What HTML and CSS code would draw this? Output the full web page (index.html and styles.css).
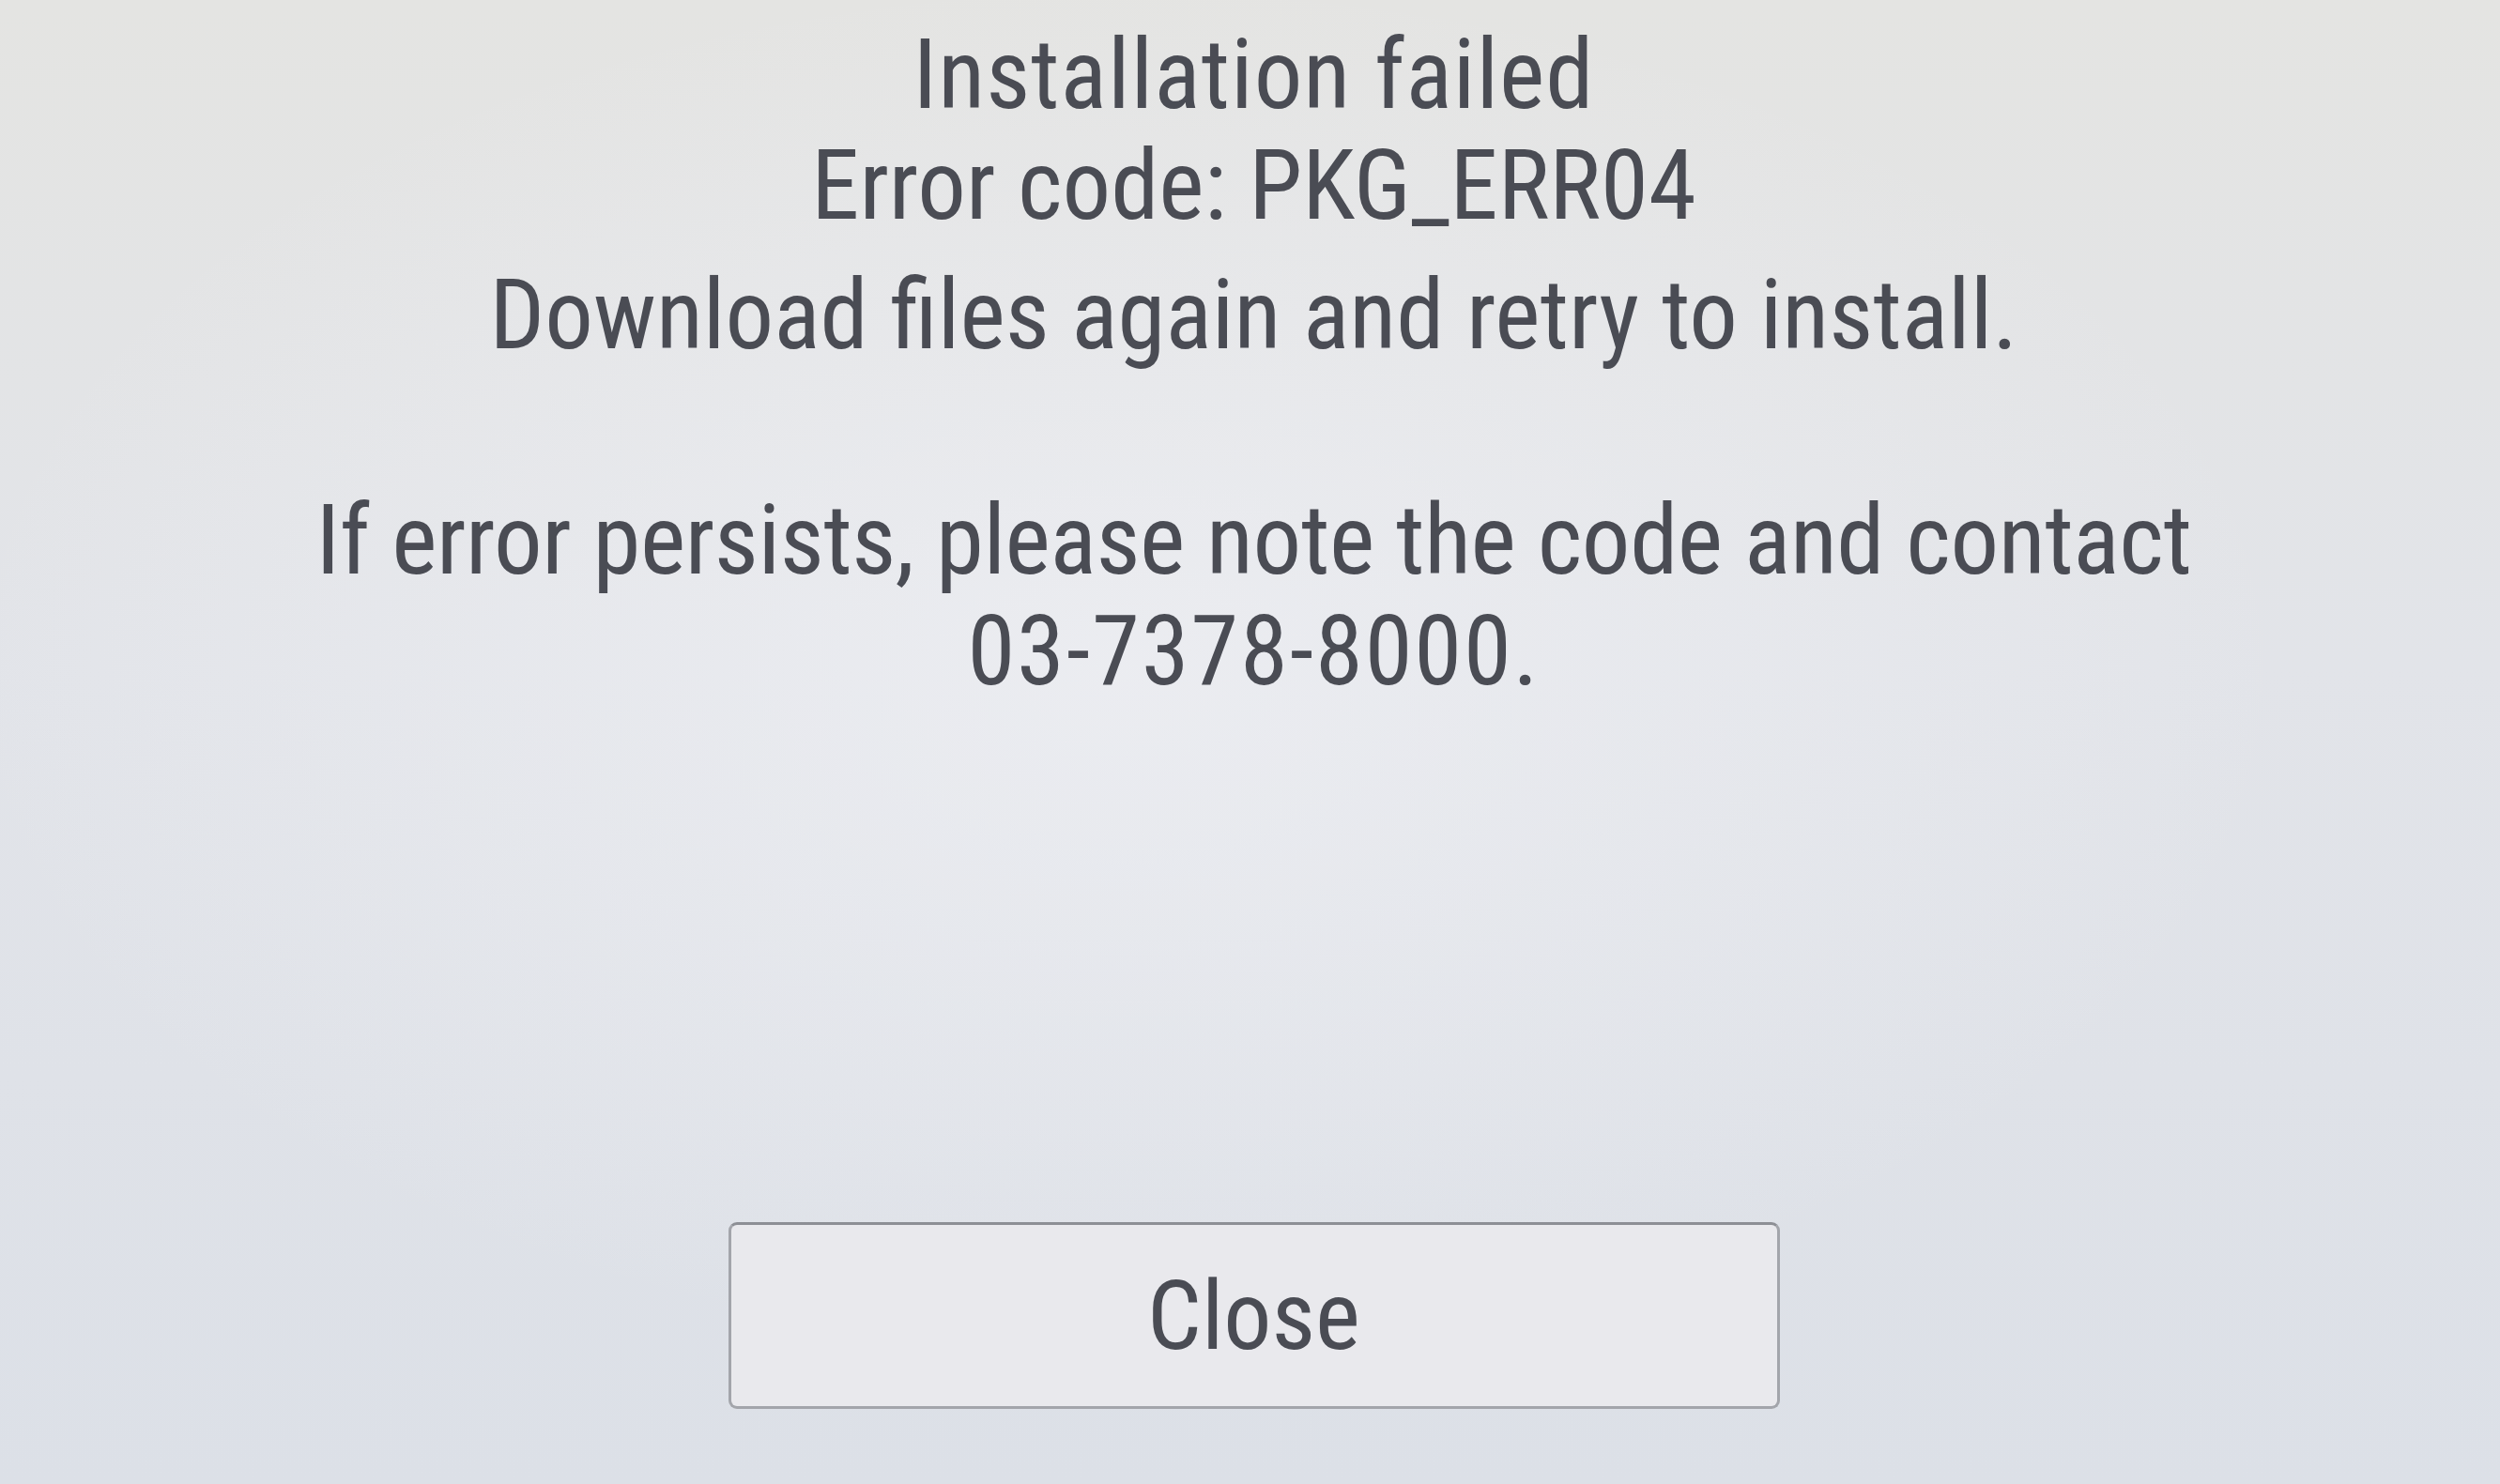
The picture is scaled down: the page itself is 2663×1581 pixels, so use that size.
FILE: index.html
```html
<!DOCTYPE html>
<html lang="en">
<head>
    <meta charset="UTF-8">
    <meta name="viewport" content="width=device-width, initial-scale=1.0">
    <title>Installation failed</title>
    <link rel="stylesheet" href="styles.css">
</head>
<body>
    <div class="screen">
        <!-- Error message -->
        <div class="message">
            <p class="title">Installation failed</p>
            <p>Error code: PKG_ERR04</p>
            <p class="hint">Download files again and retry to install.</p>
            <p class="contact">If error persists, please note the code and contact</p>
            <p class="phone">03-7378-8000.</p>
        </div>

        <!-- Close button -->
        <button type="button" class="close-btn">Close</button>
    </div>
</body>
</html>
```

FILE: styles.css
```css
html,
body {
    margin: 0;
    height: 100%;
}

body {
    font-family: Roboto, "Open Sans", sans-serif;
    font-stretch: 75%;
    color: #4a4c54;
    background:
        radial-gradient(ellipse at 45% 45%, rgba(239, 240, 244, 0.7), rgba(239, 240, 244, 0) 60%),
        linear-gradient(180deg, #e4e4e2 0%, #e2e4e9 45%, #dce0e7 100%);
}

.screen {
    height: 100vh;
    box-sizing: border-box;
    padding: 21px 0 80px 8px;
    display: flex;
    flex-direction: column;
    align-items: center;
    justify-content: space-between;
}

.message {
    text-align: center;
    font-size: 103px;
    line-height: 118px;
}

.message p {
    margin: 0;
}

.message .title {
    letter-spacing: 1px;
}

.message .hint {
    margin-top: 20px;
}

.message .contact {
    margin-top: 122px;
    letter-spacing: -0.4px;
}

.message .phone {
    letter-spacing: 1.8px;
}

.close-btn {
    width: 1120px;
    height: 199px;
    font-family: inherit;
    font-stretch: 75%;
    font-size: 102px;
    color: #4a4c54;
    background-color: #e9e9ed;
    border: 3px solid #a3a5ab;
    border-top-color: #8d8f95;
    border-radius: 9px;
    padding: 0;
    cursor: pointer;
}
```
